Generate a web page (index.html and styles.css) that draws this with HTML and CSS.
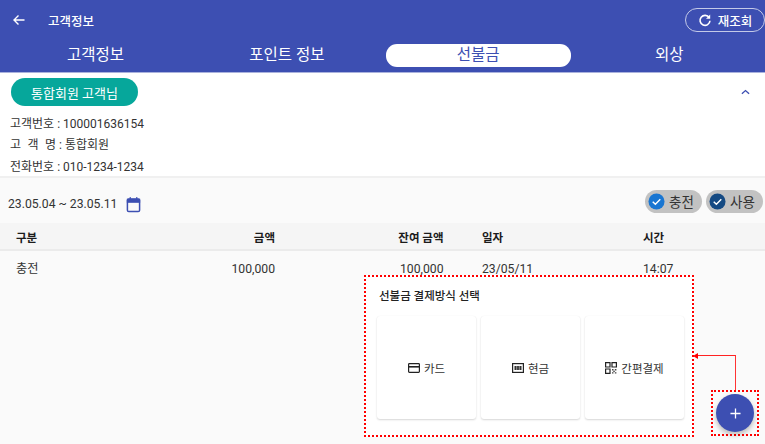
FILE: index.html
```html
<!DOCTYPE html>
<html lang="ko">
<head>
<meta charset="utf-8">
<title>고객정보</title>
<link rel="stylesheet" href="styles.css">
</head>
<body>
<div class="app">
  <header class="header">
    <div class="toolbar">
      <svg class="back" viewBox="0 0 14 14" width="14" height="14"><path d="M12.5 7H2M6.5 2.5L2 7l4.5 4.5" fill="none" stroke="#fff" stroke-width="1.4"/></svg>
      <span class="title">고객정보</span>
      <button class="refresh">
        <svg viewBox="0 0 14 14" width="14" height="14"><path d="M11.2 4.6A5 5 0 1 0 12 7.8" fill="none" stroke="#fff" stroke-width="1.6"/><path d="M12.2 1.6v4.2H8z" fill="#fff"/></svg>
        <span>재조회</span>
      </button>
    </div>
    <nav class="tabs">
      <span class="tab">고객정보</span>
      <span class="tab">포인트 정보</span>
      <span class="tab active">선불금</span>
      <span class="tab">외상</span>
    </nav>
  </header>
  <section class="customer">
    <div class="customer-top">
      <span class="badge">통합회원 고객님</span>
      <svg class="chev" viewBox="0 0 10 6" width="9" height="6"><path d="M1 5l4-3.6L9 5" fill="none" stroke="#3d4fb2" stroke-width="1.5"/></svg>
    </div>
    <p class="info">고객번호 : 100001636154</p>
    <p class="info"><span class="spaced">고 객 명</span> : 통합회원</p>
    <p class="info">전화번호 : 010-1234-1234</p>
  </section>
  <section class="filter">
    <div class="range">
      <span>23.05.04 ~ 23.05.11</span>
      <svg viewBox="0 0 16 18" width="15" height="17"><rect x="1.5" y="3" width="13" height="13.5" rx="1.5" fill="none" stroke="#3d4fb2" stroke-width="1.6"/><path d="M1.5 3.5h13v3h-13zM4.5 1v3M11.500 1v3" fill="#3d4fb2" stroke="#3d4fb2" stroke-width="1.200"/></svg>
    </div>
    <div class="chips">
      <span class="chip">
        <svg viewBox="0 0 18 18" width="17" height="17"><circle cx="9" cy="9" r="8.500" fill="#1976d2"/><path d="M5 9.300l2.800 2.700L13 6.700" fill="none" stroke="#fff" stroke-width="1.500"/></svg>
        충전
      </span>
      <span class="chip">
        <svg viewBox="0 0 18 18" width="17" height="17"><circle cx="9" cy="9" r="8.500" fill="#154a83"/><path d="M5 9.300l2.800 2.700L13 6.700" fill="none" stroke="#fff" stroke-width="1.500"/></svg>
        사용
      </span>
    </div>
  </section>
  <div class="row head">
    <span class="c1">구분</span><span class="c2">금액</span><span class="c3">잔여 금액</span><span class="c4">일자</span><span class="c5">시간</span>
  </div>
  <div class="row body">
    <span class="c1">충전</span><span class="c2">100,000</span><span class="c3">100,000</span><span class="c4">23/05/11</span><span class="c5">14:07</span>
  </div>

  <div class="popup">
    <h2 class="popup-title">선불금 결제방식 선택</h2>
    <div class="options">
      <div class="option">
        <svg viewBox="0 0 12 10" width="12" height="10"><rect x=".6" y=".6" width="10.800" height="8.800" rx=".8" fill="none" stroke="#222" stroke-width="1.200"/><path d="M.6 3.800h10.800" stroke="#222" stroke-width="1.600"/></svg>
        <span>카드</span>
      </div>
      <div class="option">
        <svg viewBox="0 0 12 10" width="12" height="10"><rect x=".6" y=".6" width="10.800" height="8.800" fill="none" stroke="#222" stroke-width="1.200"/><rect x="2.500" y="3" width="7" height="4" fill="#333"/><path d="M4.700 3v4M7.300 3v4" stroke="#ddd" stroke-width=".6"/></svg>
        <span>현금</span>
      </div>
      <div class="option">
        <svg viewBox="0 0 12 12" width="12" height="12"><path d="M.6.600h4.400v4.400H.6zM7 .600h4.400v4.400H7zM.6 7h4.400v4.400H.6z" fill="none" stroke="#222" stroke-width="1.200"/><path d="M7 7h1.500v1.500H7zM9.800 7h1.600v1.500H9.800zM8.300 8.700h1.500v1.400H8.300zM7 10.200h1.500v1.300H7zM9.800 10.200h1.600v1.300H9.800z" fill="#444"/></svg>
        <span>간편결제</span>
      </div>
    </div>
  </div>

  <div class="connector"></div>
  <div class="arrow-head"></div>

  <div class="fab-frame">
    <button class="fab" aria-label="추가">
      <svg viewBox="0 0 12 12" width="11" height="11"><path d="M6 .500v11M.5 6h11" stroke="#fff" stroke-width="1.400"/></svg>
    </button>
  </div>
</div>
</body>
</html>
```

FILE: styles.css
```css
* { box-sizing: border-box; }
html, body { margin: 0; padding: 0; }
body {
  width: 765px;
  height: 444px;
  overflow: hidden;
  background: #fafafa;
  font-family: Roboto, "Noto Sans CJK KR", sans-serif;
  color: #2a2a2a;
}
.app { position: relative; width: 765px; height: 444px; overflow: hidden; }

.header { height: 72.500px; background: #3d4fb2; border-bottom: 1px solid #aab2dd; color: #fff; }
.toolbar { height: 40px; display: flex; align-items: center; padding: 0 0 0 12px; }
.back { flex: none; }
.title { margin-left: 22px; font-size: 12.500px; font-weight: 500; }
.refresh {
  margin-left: auto;
  height: 24px;
  width: 80px;
  display: flex;
  align-items: center;
  justify-content: center;
  gap: 6px;
  padding: 0;
  background: transparent;
  border: 1px solid #c4cae8;
  border-radius: 12px;
  color: #fff;
  font: 500 12.500px Roboto, "Noto Sans CJK KR", sans-serif;
}
.tabs { display: grid; grid-template-columns: repeat(4, 191.250px); height: 32px; }
.tab { display: flex; align-items: center; justify-content: center; font-size: 15.500px; height: 23px; margin: 4px 3px 0; line-height: 23px; }
.tab.active { background: #fff; color: #3d4fb2; border-radius: 11px; }

.customer { height: 105px; background: #fff; border-bottom: 2px solid #f0f0f0; padding: 5.500px 10px 0 10px; }
.customer-top { display: flex; align-items: center; justify-content: space-between; margin-bottom: 7.500px; padding-left: 1px; padding-right: 5px; }
.badge {
  width: 127px; height: 28px;
  display: flex; align-items: center; justify-content: center;
  background: #06a79b; color: #fff; border-radius: 14px;
  font-size: 13px;
}
.info { margin: 0; height: 21.500px; line-height: 21.500px; font-size: 12px; color: #333; white-space: pre; }
.spaced { word-spacing: 3.500px; }

.filter { height: 45px; display: flex; align-items: center; justify-content: space-between; padding: 2px 2px 0 8px; }
.range { display: flex; align-items: center; gap: 9px; font-size: 12.200px; color: #333; padding-top: 6px; }
.chips { display: flex; gap: 4px; }
.chip {
  width: 57px; height: 23px;
  display: flex; align-items: center; gap: 4px;
  padding-left: 3px;
  background: #c2c2c2; border-radius: 12px;
  font-size: 13.500px; color: #333;
}
.chip svg { flex: none; }

.row { position: relative; display: block; font-size: 12.200px; }
.row span { position: absolute; top: 1px; white-space: nowrap; }
.head { height: 28px; line-height: 28px; background: #f5f5f5; border-bottom: 2px solid #ebebeb; font-weight: 700; color: #1c1c1c; font-size: 11.500px; }
.body { height: 34px; line-height: 34px; color: #333; }
.c1 { left: 16px; }
.c2 { right: 490px; }
.c3 { right: 321.500px; }
.c4 { left: 482px; }
.c5 { left: 643px; }

.popup {
  position: absolute; left: 364px; top: 275px; width: 330px; height: 162px;
  background: #fff;
  border: 2px dotted #f00;
  padding: 11px 0 0 11px;
}
.popup-title { margin: 0 0 11px 2px; font-size: 11.500px; line-height: 17px; font-weight: 500; color: #222; }
.options { display: flex; gap: 5px; }
.option {
  width: 99px; height: 103px;
  display: flex; align-items: center; justify-content: center; gap: 4px;
  background: #fff; border-radius: 3px;
  box-shadow: 0 1px 2px rgba(0,0,0,.16), 0 0 1px rgba(0,0,0,.06);
  font-size: 11.500px; color: #333;
}

.connector {
  position: absolute; left: 695px; top: 355px; width: 41px; height: 36px;
  border-top: 1.500px solid #f22; border-right: 1.500px solid #f33;
}
.arrow-head {
  position: absolute; left: 693px; top: 352.500px;
  border-style: solid; border-width: 3px 5px 3px 0;
  border-color: transparent #f00 transparent transparent;
}
.fab-frame {
  position: absolute; left: 711px; top: 390px; width: 48px; height: 46px;
  border: 2px dotted #f00;
  display: flex; align-items: center; justify-content: center;
}
.fab {
  width: 38px; height: 38px; padding: 0;
  display: flex; align-items: center; justify-content: center;
  background: #3d4fb2; border: 0; border-radius: 50%;
  box-shadow: 0 3px 5px rgba(0,0,0,.25);
}
```
